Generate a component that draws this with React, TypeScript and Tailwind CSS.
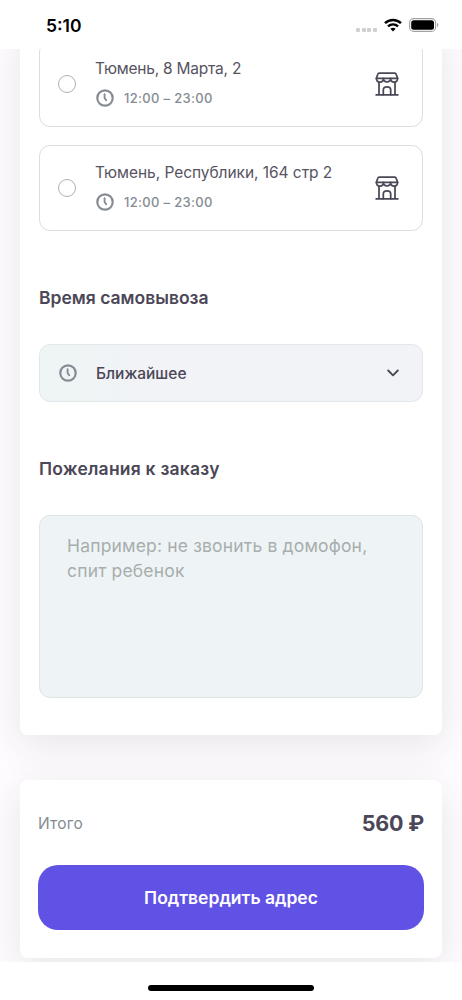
import { ReactNode } from 'react'

const ClockIcon = ({ className = '' }: { className?: string }) => (
  <svg width="18" height="18" viewBox="0 0 18 18" fill="none" stroke="currentColor" strokeLinecap="round" className={className}>
    <circle cx="9" cy="9" r="7.7" strokeWidth="2.2" />
    <path d="M8.6 5.3V9l1.6 2.3" strokeWidth="1.9" />
  </svg>
)

const StoreIcon = () => (
  <svg width="24" height="24" viewBox="0 0 24 24" fill="none" stroke="#4b4757" strokeWidth="1.75" strokeLinecap="round" strokeLinejoin="round">
    <path d="M4.200 1.100h15.600c.8 0 1.200.5 1.400 1.200l1.400 4H1.400l1.400-4c.2-.7.6-1.200 1.400-1.200z" />
    <path d="M1.400 6.300c0 5.200 7 5.200 7 0 0 4.800 7.200 4.800 7.200 0 0 5.200 7 5.200 7 0" />
    <path d="M4 10.300v12.400M20 10.300v12.400M1.200 22.900h21.600" />
    <path d="M8.300 22.700v-4.700c0-4.200 7.400-4.200 7.400 0v4.700" />
  </svg>
)

const StatusBar = () => (
  <div className="flex h-[49px] shrink-0 items-center justify-between bg-white pl-[46px] pr-[23px] pt-[2px]">
    <span className="text-[17.5px] font-semibold leading-none text-black">5:10</span>
    <div className="flex items-center">
      <div className="mr-[7px] mt-[9px] flex gap-[1.7px]">
        <i className="h-[4px] w-[4px] rounded-[1px] bg-[#d0d0d0]" />
        <i className="h-[4px] w-[4px] rounded-[1px] bg-[#d0d0d0]" />
        <i className="h-[4px] w-[4px] rounded-[1px] bg-[#d0d0d0]" />
        <i className="h-[4px] w-[4px] rounded-[1px] bg-[#d0d0d0]" />
      </div>
      <svg width="18" height="14" viewBox="0 0 18 14" fill="none" stroke="#000" strokeWidth="2.5" className="-mt-px">
        <path d="M1 5.200c4.500-4.300 11.500-4.300 16 0" />
        <path d="M4 8.400c2.900-2.700 7.100-2.700 10 0" />
        <path d="M9 13.600l-2.600-2.900c1.500-1.300 3.700-1.300 5.200 0z" fill="#000" stroke="none" />
      </svg>
      <svg width="30" height="14" viewBox="0 0 30 14" className="-mt-px ml-[7px]">
        <rect x=".6" y=".6" width="26" height="12.8" rx="4" fill="none" stroke="#a3a3a3" strokeWidth="1.1" />
        <rect x="2.2" y="2.2" width="22.8" height="9.6" rx="2.5" fill="#000" />
        <path d="M28 4.800c1.800.8 1.800 3.600 0 4.400z" fill="#a3a3a3" />
      </svg>
    </div>
  </div>
)

const AddressCard = ({ children }: { children: ReactNode }) => (
  <label className="flex h-[86px] items-center rounded-[11px] border border-[#dedede] bg-white pl-[18px] pr-[23px]">
    <span className="h-[18px] w-[18px] rounded-full border border-[#b0b0b0]" />
    <div className="ml-[19px] flex-1">
      <div className="whitespace-nowrap text-[15.5px] leading-5 text-[#57535f]">{children}</div>
      <div className="mt-[9px] mb-px flex h-5 items-center text-[#858b92]">
        <ClockIcon className="ml-px" />
        <span className="ml-[10px] text-[13px] font-medium leading-5 tracking-[0.33px]">12:00 – 23:00</span>
      </div>
    </div>
    <StoreIcon />
  </label>
)

export default function App() {
  return (
    <div className="flex h-[1000px] w-[462px] flex-col overflow-hidden bg-white font-['Inter','Liberation_Sans',sans-serif]">
      <StatusBar />
      <main className="h-[913px] shrink-0 overflow-hidden bg-[#fefcfe] px-5">
        <section className="-mt-6 h-[710px] rounded-[8px] bg-white px-[19px] pt-4 shadow-[0_10px_40px_rgba(55,45,55,0.11)]">
          <div className="flex flex-col gap-[18px]">
            <AddressCard><span className="tracking-[-0.22px]">Тюмень, 8 Марта, 2</span></AddressCard>
            <AddressCard><span className="tracking-[-0.05px]">Тюмень, Республики, 164 стр 2</span></AddressCard>
          </div>
          <h2 className="mt-[55px] text-[17.5px] font-semibold leading-6 text-[#4b4757]">Время самовывоза</h2>
          <button className="mt-[34px] flex h-[58px] w-full items-center rounded-[11px] border border-[#e2e7e9] bg-linear-to-r from-[#eef5f5] via-[#f1f3f6] via-25% to-[#f1f3f6] pl-[19px] pr-[23px]">
            <ClockIcon className="text-[#858b92]" />
            <span className="ml-[19px] mt-px flex-1 text-left text-[15.5px] font-medium leading-5 text-[#4b4757]">Ближайшее</span>
            <svg width="12" height="8" viewBox="0 0 12 8" fill="none" stroke="#4b4757" strokeWidth="1.9" strokeLinecap="round" strokeLinejoin="round">
              <path d="M1.200 1.500L6 6.300l4.800-4.800" />
            </svg>
          </button>
          <h2 className="mt-[55px] text-[17.5px] font-semibold leading-6 tracking-[0.22px] text-[#4b4757]">Пожелания к заказу</h2>
          <textarea
            className="mt-[34px] block h-[183px] w-full resize-none rounded-[11px] border border-[#dfe5e4] bg-[#eef4f5] px-[27px] pt-[18px] text-[17.5px] leading-[24.5px] tracking-[0.17px] placeholder:text-[#a8adad]"
            placeholder={'Например: не звонить в домофон,\nспит ребенок'}
          />
        </section>
        <section className="mt-[45px] h-[178px] rounded-[8px] bg-white px-[18px] pt-[31px] shadow-[0_10px_40px_rgba(55,45,55,0.11)]">
          <div className="flex h-6 items-center justify-between">
            <span className="mt-px text-[15.5px] tracking-[0.2px] text-[#858b92]">Итого</span>
            <span className="text-[21.5px] font-bold tracking-[-0.2px] text-[#4b4757]">560 ₽</span>
          </div>
          <button className="mt-[30px] h-[65px] w-full rounded-[20px] bg-[#6152e6] pt-[2px] text-[17.5px] font-semibold text-white">Подтвердить адрес</button>
        </section>
      </main>
      <div className="flex flex-1 justify-center bg-white pt-[23px]">
        <div className="h-[6px] w-[166px] rounded-full bg-black" />
      </div>
    </div>
  )
}
